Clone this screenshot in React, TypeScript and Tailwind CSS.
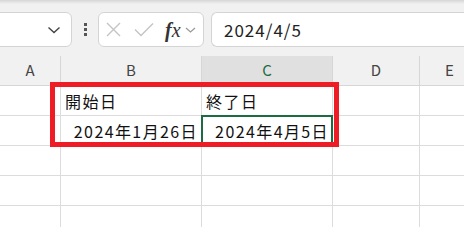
import React from 'react';

const font = { fontFamily: '"Noto Sans CJK JP", "Noto Sans", sans-serif' };

const cols = [
  { key: 'A', w: 'w-[61px]' },
  { key: 'B', w: 'w-[141px]' },
  { key: 'C', w: 'w-[131px]' },
  { key: 'D', w: 'w-[87px]' },
  { key: 'E', w: 'w-[60px]' },
];

export default function App() {
  const rows: string[][] = [
    ['', '開始日', '終了日', '', ''],
    ['', '2024年1月26日', '2024年4月5日', '', ''],
    ['', '', '', '', ''],
    ['', '', '', '', ''],
    ['', '', '', '', ''],
  ];

  return (
    <div className="relative w-[464px] h-[227px] overflow-hidden bg-white" style={font}>
      {/* Toolbar */}
      <div className="h-[56px] bg-[#f1f1f1] relative">
        <div className="h-[4px] bg-gradient-to-b from-[#d6d6d6] to-[#f1f1f1]" />
        <div className="flex items-center pt-[8px]">
          <div className="ml-[-12px] w-[84px] h-[35px] bg-white border border-[#d4d4d4] rounded-[6px] flex items-center justify-end pr-[10px]">
            <svg width="14" height="10" viewBox="0 0 14 10" fill="none">
              <path d="M1.5 2.5 L7 7.5 L12.5 2.5" stroke="#444" strokeWidth="1.4" />
            </svg>
          </div>
          <div className="w-[26px] flex flex-col items-center gap-[2px]">
            <span className="w-[3px] h-[3px] bg-[#555]" />
            <span className="w-[3px] h-[3px] bg-[#555]" />
            <span className="w-[3px] h-[3px] bg-[#555]" />
          </div>
          <div className="w-[106px] h-[35px] bg-white border border-[#d4d4d4] rounded-[6px] flex items-center pl-[6px]">
            <svg width="17" height="17" viewBox="0 0 17 17" fill="none">
              <path d="M2 2 L15 15 M15 2 L2 15" stroke="#c4c4c4" strokeWidth="1.4" />
            </svg>
            <svg className="ml-[12px]" width="20" height="15" viewBox="0 0 20 15" fill="none">
              <path d="M1 7.5 L7 13.5 L19 1.5" stroke="#c4c4c4" strokeWidth="1.4" />
            </svg>
            <span className="ml-[11px] text-[20px] italic leading-none text-[#333]" style={{ fontFamily: '"Liberation Serif", serif' }}>
              <span className="font-bold">f</span>x
            </span>
            <svg className="ml-[4px]" width="11" height="8" viewBox="0 0 11 8" fill="none">
              <path d="M1 2 L5.5 6 L10 2" stroke="#999" strokeWidth="1.2" />
            </svg>
          </div>
          <div className="ml-[7px] flex-1 h-[35px] bg-white border border-[#d4d4d4] rounded-l-[6px] border-r-0 flex items-center pl-[12px] text-[17px] tracking-[1px] text-[#222]">
            2024/4/5
          </div>
        </div>
      </div>

      {/* Column headers */}
      <div className="flex h-[30px] bg-[#f1f1f1] border-b border-[#d6d6d6]">
        {cols.map((c) => (
          <div
            key={c.key}
            className={`${c.w} shrink-0 flex items-center justify-center text-[15px] border-r border-[#d6d6d6] ${
              c.key === 'C' ? 'bg-[#e0e0e0] text-[#1e6b40]' : 'text-[#444]'
            }`}
          >
            {c.key}
          </div>
        ))}
      </div>

      {/* Grid */}
      {rows.map((r, ri) => (
        <div key={ri} className="flex h-[30px] border-b border-[#dcdcdc]">
          {r.map((v, ci) => {
            const isNum = ri === 1;
            const selected = ri === 1 && ci === 2;
            return (
              <div
                key={ci}
                className={`${cols[ci].w} shrink-0 relative flex items-center text-[16px] text-[#111] border-r border-[#dcdcdc] ${
                  isNum ? 'justify-end pr-[3px] tracking-[1.4px]' : 'pl-[4px] tracking-[1.5px]'
                }`}
              >
                {v}
                {selected && (
                  <div className="absolute left-[-1px] top-[-1px] w-[132px] h-[31px] border-2 border-[#1d6b41]" />
                )}
              </div>
            );
          })}
        </div>
      ))}

      {/* Red annotation box */}
      <div className="absolute left-[50px] top-[82px] w-[289px] h-[65px] border-[5px] border-[#ee1c25]" />
    </div>
  );
}
